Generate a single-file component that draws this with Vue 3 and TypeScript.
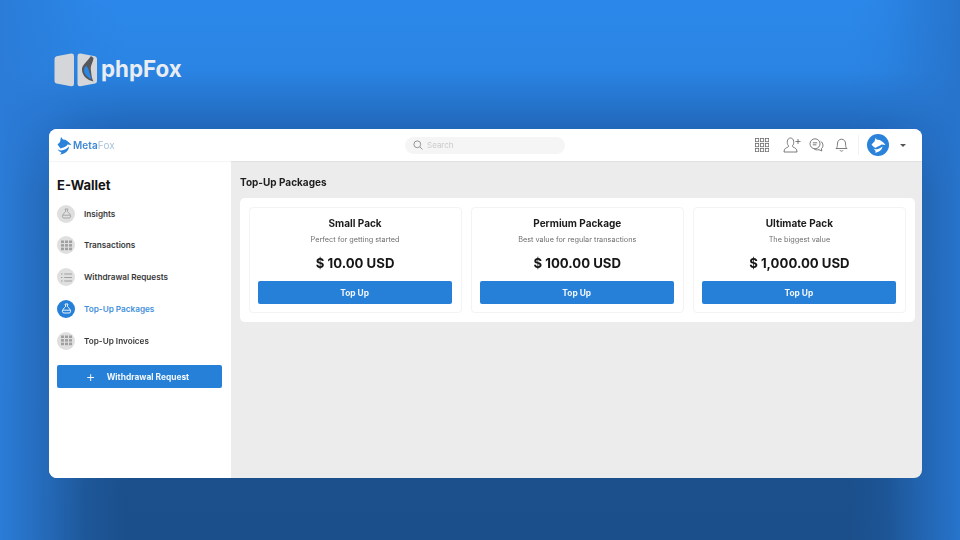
<script setup lang="ts">
interface Pack { name: string; desc: string; price: string }
interface NavItem { label: string; icon: string; active?: boolean }
const packs: Pack[] = [
  { name: 'Small Pack', desc: 'Perfect for getting started', price: '$ 10.00 USD' },
  { name: 'Permium Package', desc: 'Best value for regular transactions', price: '$ 100.00 USD' },
  { name: 'Ultimate Pack', desc: 'The biggest value', price: '$ 1,000.00 USD' },
]
const nav: NavItem[] = [
  { label: 'Insights', icon: 'bag' },
  { label: 'Transactions', icon: 'grid' },
  { label: 'Withdrawal Requests', icon: 'list' },
  { label: 'Top-Up Packages', icon: 'bag', active: true },
  { label: 'Top-Up Invoices', icon: 'grid' },
]
const dots: number[][] = [0, 1, 2].flatMap((r) => [0, 1, 2].map((c) => [c, r]))
</script>

<template>
  <div class="page">
    <div class="brand">
      <svg class="brand-mark" width="44" height="34" viewBox="0 0 44 34">
        <path d="M0.5 6 Q0.5 3.8 2.5 3.2 L17 0.6 Q20 0.3 20 3 V31 Q20 33.7 17 33.3 L2.5 30.6 Q0.5 30 0.5 28Z" fill="#d4d6d9" />
        <path d="M23.5 3 Q23.5 .3 26.5 .6 L41 3.2 Q43 3.8 43 6 V28 Q43 30 41 30.6 L26.5 33.3 Q23.5 33.7 23.5 31Z" fill="#d4d6d9" />
        <path d="M37 3 L39.5 5 C39 10 36 12 37 18 C37.5 23 38 26 39.5 28.5 C33 27 28.5 23 28 17 C27.5 12 33 9 37 3Z" fill="#55575c" />
        <path d="M31.5 13.5 C29.5 15.5 29.5 19 31.5 21.5 C33.5 24 35.5 25.5 37.5 26 C36 22 35 17 33.5 14.5 C33 13.5 32 13 31.5 13.5Z" fill="#2b87e6" />
      </svg>
      <span class="brand-name">phpFox</span>
    </div>

    <div class="window">
      <header class="top">
        <div class="logo">
          <svg width="15" height="19" viewBox="0 0 15 19">
            <path d="M0.5 8.5 L3 6 L4 1 L6 3.5 C9 3.5 11.5 5.5 14.5 9 L10.5 8.5 C9.5 11 6 11.5 3.5 12.5 C2.5 11 1.5 10 0.5 8.5Z" fill="#2a82da" />
            <path d="M0.5 12.5 C1.5 15 5.5 15 9 13 L12 10.5 C12 14.5 8 18.5 2.5 18.5 C5.5 17 4.5 16 2.5 15.5 C1.5 14.8 0.8 13.8 0.5 12.5Z" fill="#2a82da" />
          </svg>
          <span class="logo-text"><b>Meta</b>Fox</span>
        </div>
        <div class="search">
          <svg width="10" height="10" viewBox="0 0 10 10" fill="none" stroke="#8b8b8b" stroke-width=".9">
            <circle cx="4.3" cy="4.3" r="3.4" />
            <path d="M6.8 6.8 L9.4 9.4" />
          </svg>
          <span>Search</span>
        </div>
        <div class="actions">
          <svg width="14" height="14" viewBox="0 0 14 14" fill="none" stroke="#6e6e6e" stroke-width=".8">
            <rect v-for="(d, i) in dots" :key="i" :x="d[0] * 5 + .5" :y="d[1] * 5 + .5" width="3.2" height="3.2" />
          </svg>
          <svg class="a-user" width="18" height="16" viewBox="0 0 18 16" fill="none" stroke="#6e6e6e" stroke-width=".9">
            <path d="M1 15 C1 11.5 3 11 5 10 C5.8 9.6 5.6 8.6 5 8 C3.8 6.8 3.7 1 7.5 1 C11.3 1 11.2 6.8 10 8 C9.4 8.6 9.2 9.6 10 10 C12 11 14 11.5 14 15 Z" />
            <path d="M12.5 4.5 H17.5 M15 2 V7" />
          </svg>
          <svg class="a-chat" width="15" height="14" viewBox="0 0 15 14" fill="none" stroke="#6e6e6e" stroke-width=".9">
            <circle cx="6" cy="5.8" r="5" />
            <path d="M3.8 4.8 H8.2 M3.8 6.8 H7.4" />
            <path d="M11.6 3.2 C14.6 5.2 14.6 9.2 12.4 10.6 L12.8 13 L10 11.7 C8 12.2 6.3 11.8 5.2 11" />
          </svg>
          <svg class="a-bell" width="13" height="14" viewBox="0 0 13 14" fill="none" stroke="#6e6e6e" stroke-width=".9">
            <path d="M1 10.5 C2.3 9.5 2.4 8 2.4 6 C2.4 3 4.2 1.2 6.5 1.2 C8.8 1.2 10.6 3 10.6 6 C10.6 8 10.7 9.5 12 10.5 Z" />
            <path d="M5 12.3 C5.5 13.5 7.5 13.5 8 12.3" />
          </svg>
          <span class="divider"></span>
          <svg class="avatar" width="22" height="22" viewBox="0 0 22 22">
            <circle cx="11" cy="11" r="11" fill="#2a82da" />
            <path d="M4.5 10.5 L7.5 7.5 L8.5 4 L10 5.8 C13 5.5 16 7.5 18.5 11 L14.5 10.5 C13 12 10 12.5 8.5 14 C6.8 13 5.5 12 4.5 10.5Z" fill="#fff" />
            <path d="M6 14.5 C8 16 11.5 15.5 15.5 12.5 C15 16 12 18.5 8 18.5 C9.5 17.2 8 15.8 6 14.5Z" fill="#fff" />
          </svg>
          <span class="caret"></span>
        </div>
      </header>

      <div class="body">
        <aside class="side">
          <h1 class="side-title">E-Wallet</h1>
          <nav class="nav">
            <div v-for="item in nav" :key="item.label" class="nav-item" :class="{ active: item.active }">
              <span class="nav-icon">
                <svg v-if="item.icon === 'bag'" width="11" height="11" viewBox="0 0 11 11" fill="none" stroke="currentColor" stroke-width=".9">
                  <path d="M4 1 H7 L6.2 3.2 C7 4 8 5 9 6.5 C10 8 9.8 10 8 10 H3 C1.2 10 1 8 2 6.5 C3 5 4 4 4.8 3.2 Z" />
                  <path d="M1.6 7.2 H9.4" />
                </svg>
                <svg v-else-if="item.icon === 'grid'" width="11" height="11" viewBox="0 0 11 11" fill="currentColor">
                  <rect v-for="(d, i) in dots" :key="i" :x="d[0] * 4" :y="d[1] * 3.6 + .5" width="3" height="2.5" />
                </svg>
                <svg v-else width="11" height="11" viewBox="0 0 11 11" fill="none" stroke="currentColor" stroke-width="1.1">
                  <path d="M0 2 H1.5 M3.2 2 H11 M0 5.5 H1.5 M3.2 5.5 H11 M0 9 H1.5 M3.2 9 H11" />
                </svg>
              </span>
              <span class="nav-label">{{ item.label }}</span>
            </div>
          </nav>
          <button class="withdraw" type="button"><span class="plus">+</span><span>Withdrawal Request</span></button>
        </aside>
        <main class="content">
          <h2 class="content-title">Top-Up Packages</h2>
          <section class="panel">
            <article v-for="p in packs" :key="p.name" class="card">
              <h3 class="card-name">{{ p.name }}</h3>
              <p class="card-desc">{{ p.desc }}</p>
              <p class="card-price">{{ p.price }}</p>
              <button class="card-btn" type="button">Top Up</button>
            </article>
          </section>
        </main>
      </div>
    </div>
  </div>
</template>

<style>
body { margin: 0; }
</style>

<style scoped>
.page {
  width: 960px;
  height: 540px;
  box-sizing: border-box;
  padding: 0 38px 62px 49px;
  display: flex;
  flex-direction: column;
  overflow: hidden;
  font-family: Inter, "Liberation Sans", sans-serif;
  background:
    linear-gradient(90deg, rgba(43,124,216,1) 0, rgba(43,124,216,.55) 50px, rgba(43,124,216,.18) 85px, rgba(43,124,216,0) 125px),
    linear-gradient(270deg, rgba(39,116,204,1) 0, rgba(39,116,204,.5) 45px, rgba(39,116,204,.15) 75px, rgba(39,116,204,0) 110px),
    linear-gradient(180deg, #2b88ea 0%, #2a84e3 13%, #2167ba 24%, #1c5291 36%, #1b4f8b 100%);
}
.brand {
  height: 129px;
  box-sizing: border-box;
  padding: 53px 0 0 5px;
  display: flex;
  align-items: flex-start;
  gap: 3px;
  flex: none;
}
.brand-name {
  font-family: Inter, "Open Sans", sans-serif;
  font-size: 22.3px;
  font-weight: 700;
  line-height: 31px;
  color: #e9edf2;
}
.window {
  flex: 1;
  min-height: 0;
  background: #ececec;
  border-radius: 8px;
  overflow: hidden;
  display: flex;
  flex-direction: column;
  filter: blur(.25px);
}
.top {
  height: 32px;
  flex: none;
  background: #fff;
  display: grid;
  grid-template-columns: 1fr 160px 1fr;
  align-items: center;
  padding: 0 13px 0 8px;
  box-shadow: 0 1px 1px rgba(0,0,0,.04);
  position: relative;
}
.logo { display: flex; align-items: center; gap: 1px; }
.logo-text { font-size: 10px; color: #a9c2dc; letter-spacing: .1px; }
.logo-text b { color: #3f88d2; font-weight: 600; }
.search {
  height: 17px;
  border-radius: 9px;
  background: #f5f5f5;
  display: flex;
  align-items: center;
  gap: 4px;
  padding-left: 8px;
  margin: 0 -2px 0 2px;
  font-size: 8px;
  color: #cbcbcb;
}
.actions { display: flex; align-items: center; justify-content: flex-end; }
.a-user { margin-left: 14px; }
.a-chat { margin-left: 8px; }
.a-bell { margin-left: 11px; }
.divider { width: 1px; height: 20px; background: #f1f1f1; margin: 0 8px 0 10px; }
.caret {
  width: 0;
  height: 0;
  margin-left: 11px;
  margin-right: 3px;
  border-left: 3px solid transparent;
  border-right: 3px solid transparent;
  border-top: 3.5px solid #555;
}
.body { flex: 1; display: flex; min-height: 0; }
.side {
  width: 182px;
  flex: none;
  background: #fff;
  box-sizing: border-box;
  padding: 16px 9px 0 8px;
}
.side-title {
  margin: 0 0 11.5px;
  font-size: 13px;
  line-height: 16px;
  font-weight: 700;
  color: #141414;
}
.nav { display: flex; flex-direction: column; gap: 13.75px; }
.nav-item { display: flex; align-items: center; gap: 9px; height: 18px; font-size: 8.2px; font-weight: 600; color: #383838; }
.nav-icon {
  width: 18px;
  height: 18px;
  border-radius: 50%;
  background: #dfdfdf;
  color: #a0a0a0;
  display: flex;
  align-items: center;
  justify-content: center;
  flex: none;
}
.nav-item.active { color: #3f8fdc; }
.nav-item.active .nav-icon { background: #2680d8; color: #fff; }
.withdraw {
  margin-top: 15.5px;
  width: 100%;
  height: 23px;
  border: 0;
  border-radius: 2px;
  background: #2680d8;
  color: #f1f6fb;
  font: 700 8.4px Inter, "Liberation Sans", sans-serif;
  display: flex;
  align-items: center;
  justify-content: center;
  gap: 11px;
  padding: 0 4px 0 0;
}
.plus { font-size: 15px; font-weight: 300; line-height: 14px; }
.content { flex: 1; min-width: 0; padding: 15px 7px 0 9px; }
.content-title {
  margin: 0 0 9px;
  font-size: 10px;
  line-height: 13px;
  font-weight: 700;
  color: #1e1e1e;
}
.panel {
  background: #fff;
  border-radius: 5px;
  padding: 9px 9px 9px 8.5px;
  display: grid;
  grid-template-columns: repeat(3, 1fr);
  gap: 9px;
}
.card {
  height: 106px;
  box-sizing: border-box;
  border: 1px solid #f3f3f3;
  border-radius: 4px;
  padding: 8px 9px 0;
  text-align: center;
  display: flex;
  flex-direction: column;
}
.card-name { margin: 0; font-size: 10px; line-height: 14px; font-weight: 700; color: #1c1c1c; }
.card-desc { margin: 4px 0 0; font-size: 7.3px; line-height: 12px; color: #6f6f6f; }
.card-price { margin: 8px 0 0; font-size: 13.2px; line-height: 18px; font-weight: 700; color: #161616; }
.card-btn {
  margin: 9px 0 0 -1px;
  height: 23px;
  border: 0;
  border-radius: 2px;
  background: #2680d8;
  color: #f1f6fb;
  font: 700 8.4px Inter, "Liberation Sans", sans-serif;
}
</style>
